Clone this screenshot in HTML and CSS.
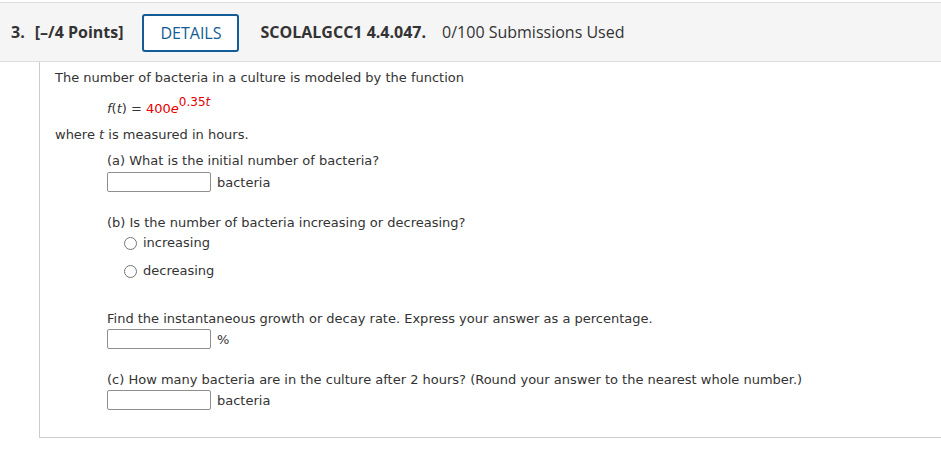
FILE: index.html
```html
<!DOCTYPE html>
<html lang="en">
<head>
    <meta charset="UTF-8">
    <title>Question 3</title>
    <link rel="stylesheet" href="styles.css">
</head>
<body>
    <div class="question-head">
        <span class="q-num">3.</span>
        <span class="q-points">[&ndash;/4 Points]</span>
        <button type="button" class="details-btn">DETAILS</button>
        <span class="q-id">SCOLALGCC1 4.4.047.</span>
        <span class="q-subs">0/100 Submissions Used</span>
    </div>

    <div class="question-body">
        <p class="line">The number of bacteria in a culture is modeled by the function</p>
        <p class="line formula">
            <i>f</i>(<i>t</i>) = <span class="red">400<i>e</i><sup>0.35<i>t</i></sup></span>
        </p>
        <p class="line where">where <i>t</i> is measured in hours.</p>

        <div class="part">
            <p class="line">(a) What is the initial number of bacteria?</p>
            <div class="answer">
                <input type="text" class="ans-box">
                <span>bacteria</span>
            </div>

            <p class="line part-b">(b) Is the number of bacteria increasing or decreasing?</p>
            <label class="choice"><input type="radio" name="dir"> increasing</label>
            <label class="choice second"><input type="radio" name="dir"> decreasing</label>

            <p class="line find">Find the instantaneous growth or decay rate. Express your answer as a percentage.</p>
            <div class="answer tight">
                <input type="text" class="ans-box">
                <span>%</span>
            </div>

            <p class="line part-c">(c) How many bacteria are in the culture after 2 hours? (Round your answer to the nearest whole number.)</p>
            <div class="answer tight">
                <input type="text" class="ans-box">
                <span>bacteria</span>
            </div>
        </div>
    </div>
</body>
</html>
```

FILE: styles.css
```css
body {
    margin: 0;
    background: #fff;
    color: #333;
}
.question-head {
    margin-top: 2px;
    height: 58px;
    border-top: 1px solid #ddd;
    border-bottom: 1px solid #ddd;
    background: #f5f5f5;
    display: flex;
    align-items: center;
    padding-left: 11px;
    font-family: "Open Sans", sans-serif;
    font-size: 16px;
    color: #333;
}
.q-num {
    font-weight: bold;
    margin-right: 10px;
}
.q-points {
    font-weight: bold;
    margin-right: 19px;
}
.details-btn {
    width: 97px;
    height: 38px;
    margin-top: 1px;
    border: 2px solid #135c96;
    border-radius: 3px;
    background: #fff;
    color: #135c96;
    font-family: "Open Sans", sans-serif;
    font-size: 16px;
    padding: 0;
    margin-right: 21px;
}
.q-id {
    font-weight: bold;
    margin-right: 16px;
}
.question-body {
    margin-left: 39px;
    border-left: 1px solid #ccc;
    border-bottom: 1px solid #ccc;
    padding: 6px 0 27px 15px;
    font-family: "DejaVu Sans", Verdana, sans-serif;
    font-size: 13px;
    color: #333;
}
.line {
    margin: 0;
    line-height: 20px;
}
.formula {
    margin: 11px 0 0 52px;
}
.red {
    color: #e60000;
}
sup {
    font-size: 12px;
    vertical-align: 0;
    position: relative;
    top: -7px;
}
.where {
    margin-top: 6px;
}
.part {
    margin: 6px 0 0 52px;
}
.answer {
    display: flex;
    align-items: center;
    margin-top: 1px;
    height: 20px;
}
.answer.tight {
    margin-top: 0;
}
.ans-box {
    width: 104px;
    height: 20px;
    box-sizing: border-box;
    border: 1px solid #8f8f8f;
    border-radius: 2px;
    margin: 0 6px 0 0;
    padding: 0;
}
.part-b {
    margin-top: 21px;
}
.choice {
    display: flex;
    align-items: center;
    height: 20px;
    line-height: 20px;
    padding-left: 17px;
}
.choice.second {
    margin-top: 8px;
}
.choice input {
    appearance: none;
    width: 13px;
    height: 13px;
    border: 1px solid #767676;
    border-radius: 50%;
    margin: 0 6px 0 0;
    box-sizing: border-box;
}
.find {
    margin-top: 28px;
}
.part-c {
    margin-top: 21px;
}
```
